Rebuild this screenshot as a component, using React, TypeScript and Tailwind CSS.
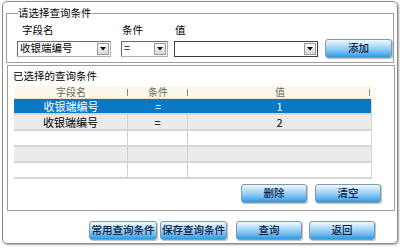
import React from "react";

const font = { fontFamily: '"Noto Sans CJK SC", "Liberation Sans", sans-serif' };

function Btn({ label, w }: { label: string; w: string }) {
  return (
    <div
      className={`${w} h-[19px] flex items-center justify-center rounded-[3px] border border-[#7e98ad] bg-gradient-to-b from-[#f2f9fe] via-[#96d0f4] to-[#2a9be4] text-[10.5px] leading-none text-[#0f1d44] font-medium shadow-[1px_1px_1px_rgba(0,0,0,0.25)]`}
    >
      {label}
    </div>
  );
}

function Combo({ w, text, dark }: { w: string; text?: string; dark?: boolean }) {
  return (
    <div
      className={`${w} h-[16px] flex items-center justify-between bg-white border ${
        dark ? "border-[#3c3c3c]" : "border-t-[#6a6a6a] border-l-[#6a6a6a] border-r-[#b0b0b0] border-b-[#b0b0b0]"
      } pl-[2px] pr-[1px]`}
    >
      <span className="text-[10.5px] leading-none text-black whitespace-nowrap">{text}</span>
      <div className="w-[12px] h-[12px] flex items-center justify-center border border-[#9a9a9a] bg-gradient-to-b from-[#fafafa] to-[#d8d8d8]">
        <svg width="6" height="4" viewBox="0 0 6 4">
          <polygon points="0,0 6,0 3,3.5" fill="#111" />
        </svg>
      </div>
    </div>
  );
}

const rows = [
  { a: "收银端编号", b: "=", c: "1", sel: true },
  { a: "收银端编号", b: "=", c: "2", gray: true },
  { a: "", b: "", c: "" },
  { a: "", b: "", c: "", gray: true },
  { a: "", b: "", c: "" },
];

export default function App() {
  return (
    <div className="w-[400px] h-[248px] bg-white pt-[1px] pl-[2px]" style={font}>
      <div className="w-[396px] h-[243px] border border-[#8a8a8a] rounded-[5px] shadow-[1px_1px_2px_rgba(0,0,0,0.35)] flex flex-col">
        <fieldset className="ml-[3px] mt-[4px] w-[388px] border border-[#9c9c9c] pl-[10px] pb-[4px]">
          <legend className="ml-[1px] px-0 text-[10.5px] leading-[14px] text-black">请选择查询条件</legend>
          <div className="flex text-[10.5px] leading-[14px] text-black mt-[3px]">
            <div className="w-[104px] pl-[5px]">字段名</div>
            <div className="w-[53px] pl-[1px]">条件</div>
            <div className="pl-[1px]">值</div>
          </div>
          <div className="flex items-center mt-[2px]">
            <Combo w="w-[94px]" text="收银端编号" />
            <div className="w-[10px]" />
            <Combo w="w-[47px]" text="=" />
            <div className="w-[6px]" />
            <Combo w="w-[144px]" dark />
            <div className="w-[7px]" />
            <Btn label="添加" w="w-[67px]" />
          </div>
        </fieldset>
        <div className="ml-[4px] mt-[2px] w-[388px] h-[146px] border border-[#9c9c9c] flex flex-col pl-[6px]">
          <div className="text-[10.5px] leading-[14px] text-black mt-[3px] ml-[-1px]">已选择的查询条件</div>
          <div className="mt-[3px] w-[358px] flex flex-col">
            <div className="h-[13px] flex bg-[#fcf8ea] text-[10px] leading-none text-[#666] border-b border-[#e4dfd0]">
              <div className="w-[114px] flex items-center justify-center relative">
                字段名
                <span className="absolute right-0 top-[3px] h-[7px] w-px bg-[#888]" />
              </div>
              <div className="w-[60px] flex items-center justify-center relative">
                条件
                <span className="absolute right-0 top-[3px] h-[7px] w-px bg-[#888]" />
              </div>
              <div className="w-[184px] flex items-center justify-center relative">
                值
                <span className="absolute right-[2px] top-[3px] h-[7px] w-px bg-[#888]" />
              </div>
            </div>
            {rows.map((r, i) => (
              <div
                key={i}
                className={`h-[16px] flex border-b-2 border-r border-[#d6d6d6] text-[11px] leading-none ${
                  r.sel ? "bg-[#0a78c2] text-white" : r.gray ? "bg-[#ebebeb] text-black" : "bg-white text-black"
                }`}
              >
                <div className={`w-[114px] flex items-center justify-center ${r.sel ? "" : "border-r border-[#cfcfcf]"}`}>{r.a}</div>
                <div className={`w-[60px] flex items-center justify-center ${r.sel ? "" : "border-r border-[#cfcfcf]"}`}>{r.b}</div>
                <div className="flex-1 flex items-center justify-center">{r.c}</div>
              </div>
            ))}
          </div>
          <div className="flex mt-[5px] pl-[227px] gap-[8px]">
            <Btn label="删除" w="w-[66px]" />
            <Btn label="清空" w="w-[66px]" />
          </div>
        </div>
        <div className="flex mt-[10px] pl-[86px]">
          <Btn label="常用查询条件" w="w-[68px]" />
          <div className="w-[3px]" />
          <Btn label="保存查询条件" w="w-[67px]" />
          <div className="w-[9px]" />
          <Btn label="查询" w="w-[66px]" />
          <div className="w-[7px]" />
          <Btn label="返回" w="w-[66px]" />
        </div>
      </div>
    </div>
  );
}
